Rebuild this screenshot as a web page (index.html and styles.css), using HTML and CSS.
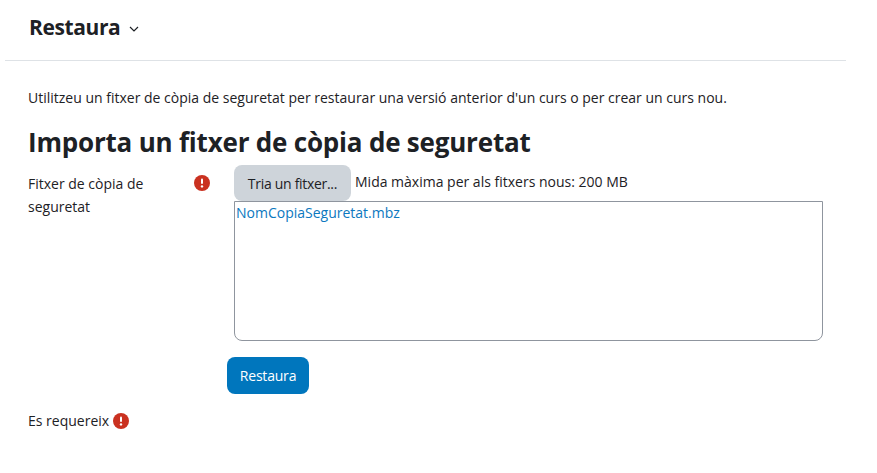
FILE: index.html
```html
<!DOCTYPE html>
<html lang="en">
<head>
  <meta charset="UTF-8">
  <meta name="viewport" content="width=device-width, initial-scale=1.0">
  <title>Restaura</title>
  <link rel="stylesheet" href="styles.css">
</head>
<body>

  <div class="page">
    <div class="page-header">
      <h2 class="page-title">Restaura</h2>
      <svg class="caret" width="10" height="6" viewBox="0 0 10 6"><path d="M1 1l4 4 4-4" fill="none" stroke="#1d2125" stroke-width="1.2"/></svg>
    </div>

    <div class="content">
      <p class="intro">Utilitzeu un fitxer de còpia de seguretat per restaurar una versió anterior d'un curs o per crear un curs nou.</p>
      <h2 class="section-title">Importa un fitxer de còpia de seguretat</h2>

      <form class="restore-form">
        <div class="form-label">
          <label>Fitxer de còpia de seguretat</label>
          <svg class="required-icon label-icon" width="16" height="16" viewBox="0 0 16 16"><circle cx="8" cy="8" r="8" fill="#ca3120"/><rect x="7" y="3.5" width="2" height="5.5" rx="1" fill="#fff"/><circle cx="8" cy="11.4" r="1.2" fill="#fff"/></svg>
        </div>
        <div class="form-field">
          <div class="picker-row">
            <button type="button" class="btn-choose">Tria un fitxer...</button>
            <span class="max-size">Mida màxima per als fitxers nous: 200 MB</span>
          </div>
          <div class="file-box"><a class="file-link">NomCopiaSeguretat.mbz</a></div>
        </div>
      </form>

      <div class="submit-row">
        <button type="button" class="btn-primary">Restaura</button>
      </div>

      <div class="required-note">
        Es requereix
        <svg class="required-icon" width="16" height="16" viewBox="0 0 16 16"><circle cx="8" cy="8" r="8" fill="#ca3120"/><rect x="7" y="3.5" width="2" height="5.5" rx="1" fill="#fff"/><circle cx="8" cy="11.4" r="1.2" fill="#fff"/></svg>
      </div>
    </div>
  </div>

</body>
</html>
```

FILE: styles.css
```css
body {
  margin: 0;
  background-color: white;
  color: #1d2125;
  font-family: "Open Sans", "Noto Sans", sans-serif;
  font-size: 14px;
}

.page {
  width: 841px;
  margin-left: 5px;
}

.page-header {
  display: flex;
  align-items: center;
  gap: 9px;
  height: 61px;
  padding-left: 24px;
  padding-bottom: 6px;
  box-sizing: border-box;
  border-bottom: 1px solid #dee2e6;
}

.page-title {
  margin: 0;
  font-size: 21px;
  font-weight: 700;
  letter-spacing: -0.4px;
}

.caret {
  margin-top: 3px;
}

.content {
  padding-left: 23px;
}

.intro {
  margin: 26px 0 0;
  line-height: 22px;
}

.section-title {
  margin: 15px 0 0;
  font-size: 26px;
  font-weight: 700;
  line-height: 36px;
  letter-spacing: -0.2px;
}

.restore-form {
  display: flex;
  margin-top: 5px;
}

.form-label {
  display: flex;
  justify-content: space-between;
  width: 182px;
  margin-right: 24px;
  padding-top: 7px;
  line-height: 23px;
}

.form-label label {
  width: 130px;
}

.label-icon {
  margin-top: 3px;
}

.form-field {
  width: 589px;
}

.picker-row {
  display: flex;
  gap: 4px;
}

.btn-choose {
  width: 117px;
  height: 36px;
  padding: 0;
  background-color: #ced4da;
  color: #1d2125;
  border: none;
  border-radius: 8px;
  font: inherit;
  letter-spacing: -0.3px;
}

.max-size {
  line-height: 34px;
}

.file-box {
  height: 140px;
  box-sizing: border-box;
  padding: 0 1px;
  border: 1px solid #8f959e;
  border-radius: 0 0 8px 8px;
  line-height: 22px;
}

.file-link {
  color: #0b78c0;
}

.submit-row {
  margin-top: 16px;
  padding-left: 199px;
}

.btn-primary {
  width: 82px;
  height: 37px;
  padding: 0;
  background-color: #0076bd;
  color: white;
  border: none;
  border-radius: 8px;
  font: inherit;
  letter-spacing: -0.2px;
}

.required-note {
  display: flex;
  align-items: center;
  gap: 4px;
  margin-top: 16px;
  line-height: 22px;
}
```
